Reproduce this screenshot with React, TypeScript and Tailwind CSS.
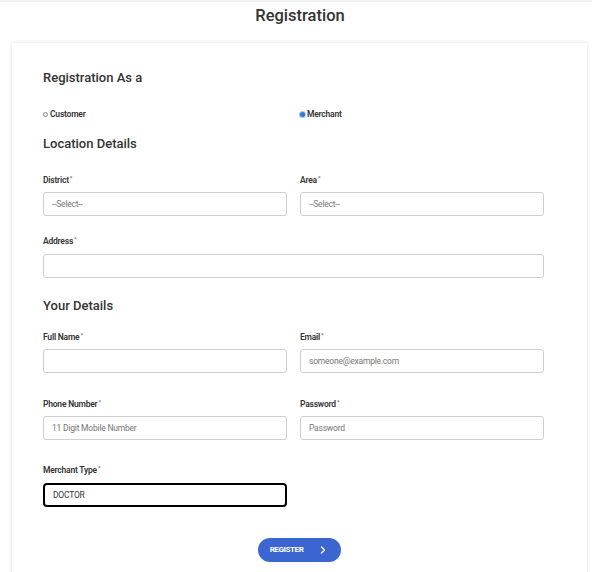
import { ChevronRight } from "lucide-react";

const font = { fontFamily: "Roboto, 'Liberation Sans', sans-serif" };

const Label = ({ text, className = "" }: { text: string; className?: string }) => (
  <div className={`h-3 leading-3 text-[8.5px] font-semibold text-[#333] tracking-tight ${className}`}>
    {text}
    <sup className="text-[6px] text-[#666] ml-[1px]">*</sup>
  </div>
);

const Field = ({
  placeholder = "",
  value = "",
  className = "",
  focused = false,
}: {
  placeholder?: string;
  value?: string;
  className?: string;
  focused?: boolean;
}) => (
  <div
    className={`h-6 flex items-center px-[8px] rounded-[3px] bg-white text-[8.5px] tracking-tight ${
      focused ? "border-2 border-black rounded-[4px] px-[7px] text-[#333]" : "border border-[#cfcfcf] text-[#777]"
    } ${className}`}
  >
    {value || placeholder}
  </div>
);

export default function App() {
  return (
    <div className="min-h-[572px] bg-white" style={font}>
      <div className="h-[2px] bg-[#f2f2f2]" />
      <h1 className="text-center pl-2 text-[16.5px] leading-6 font-medium text-[#333] mt-[2px]">Registration</h1>

      <div className="mt-[15px] ml-[12px] mr-[5px] bg-white shadow-[0_0_4px_rgba(0,0,0,0.14)] pt-[25px] pl-[31px] pr-[43px] pb-4">
        <h2 className="h-5 leading-5 text-[13px] font-medium text-[#333]">Registration As a</h2>

        <div className="grid grid-cols-2 gap-x-[13px] mt-5 h-3 text-[8.5px] font-semibold text-[#333] tracking-tight">
          <div className="flex items-center gap-[2px] leading-3">
            <span className="w-[5px] h-[5px] rounded-full border border-[#888]" />
            Customer
          </div>
          <div className="flex items-center gap-[2px] leading-3">
            <span className="w-[5px] h-[5px] rounded-full bg-[#3a75d8] ring-1 ring-[#a8c4f0]" />
            Merchant
          </div>
        </div>

        <h2 className="mt-[14px] h-5 leading-5 text-[13px] font-medium text-[#333]">Location Details</h2>

        <div className="grid grid-cols-2 gap-x-[13px] mt-5">
          <div>
            <Label text="District" />
            <Field placeholder="--Select--" className="mt-[6px] text-[#444]" />
          </div>
          <div>
            <Label text="Area" />
            <Field placeholder="--Select--" className="mt-[6px] text-[#444]" />
          </div>
        </div>

        <Label text="Address" className="mt-[19px]" />
        <Field className="mt-[7px]" />

        <h2 className="mt-[18px] h-5 leading-5 text-[13px] font-medium text-[#333]">Your Details</h2>

        <div className="grid grid-cols-2 gap-x-[13px] mt-[15px]">
          <div>
            <Label text="Full Name" />
            <Field className="mt-[6px]" />
          </div>
          <div>
            <Label text="Email" />
            <Field placeholder="someone@example.com" className="mt-[6px]" />
          </div>
        </div>

        <div className="grid grid-cols-2 gap-x-[13px] mt-[25px]">
          <div>
            <Label text="Phone Number" />
            <Field placeholder="11 Digit Mobile Number" className="mt-[6px]" />
          </div>
          <div>
            <Label text="Password" />
            <Field placeholder="Password" className="mt-[6px]" />
          </div>
        </div>

        <div className="grid grid-cols-2 gap-x-[13px] mt-[24px]">
          <div>
            <Label text="Merchant Type" />
            <Field value="DOCTOR" focused className="mt-[7px]" />
          </div>
        </div>

        <div className="flex justify-center mt-[31px] pl-[12px]">
          <button className="h-6 w-[83px] rounded-full bg-[#3b66d2] text-white text-[8px] font-bold tracking-tighter flex items-center justify-center gap-[14px]">
            REGISTER
            <ChevronRight size={12} strokeWidth={2.5} />
          </button>
        </div>
      </div>
    </div>
  );
}
